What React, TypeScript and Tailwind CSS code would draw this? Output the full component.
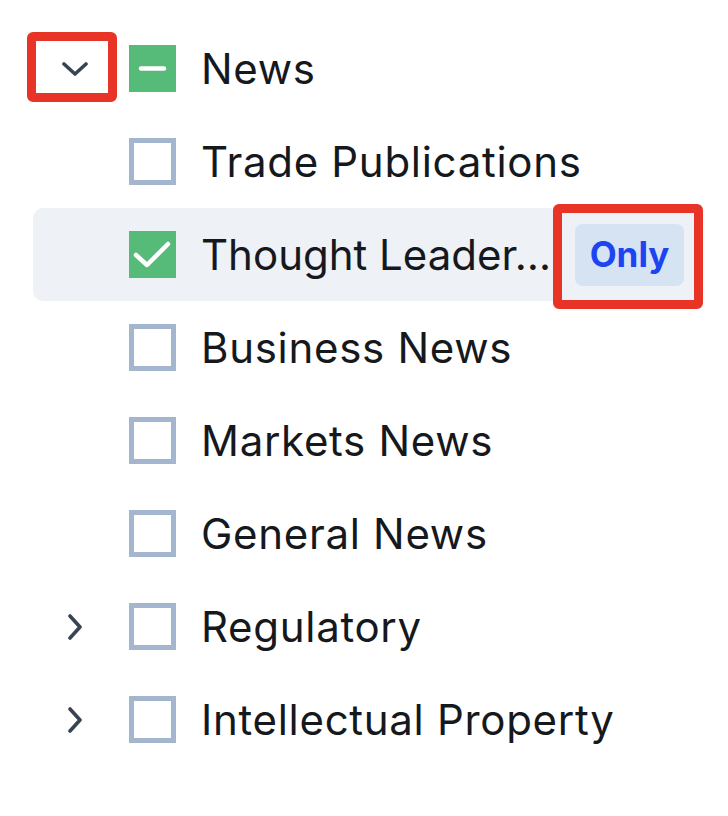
import React from 'react';

type Node = {
  label: string;
  level: 0 | 1;
  state: 'none' | 'checked' | 'partial';
  expander?: 'open' | 'closed';
  highlight?: boolean;
};

const nodes: Node[] = [
  { label: 'News', level: 0, state: 'partial', expander: 'open' },
  { label: 'Trade Publications', level: 1, state: 'none' },
  { label: 'Thought Leader…', level: 1, state: 'checked', highlight: true },
  { label: 'Business News', level: 1, state: 'none' },
  { label: 'Markets News', level: 1, state: 'none' },
  { label: 'General News', level: 1, state: 'none' },
  { label: 'Regulatory', level: 0, state: 'none', expander: 'closed' },
  { label: 'Intellectual Property', level: 0, state: 'none', expander: 'closed' },
];

const Chevron = ({ open }: { open: boolean }) => (
  <svg width="26" height="26" viewBox="0 0 26 26" fill="none" stroke="#384354" strokeWidth="3.6" strokeLinecap="round" strokeLinejoin="round">
    {open ? <path d="M2 8 L13 18 L24 8" /> : <path d="M8 2 L18 13 L8 24" />}
  </svg>
);

const Box = ({ state }: { state: Node['state'] }) => {
  if (state === 'none') {
    return <div className="w-[47px] h-[47px] shrink-0 border-[5px] border-[#a4b6cd] bg-white" />;
  }
  return (
    <div className="w-[47px] h-[47px] shrink-0 bg-[#56bb78] flex items-center justify-center">
      <svg width="47" height="47" viewBox="0 0 47 47" fill="none" stroke="#fff" strokeWidth="4.5" strokeLinecap="round" strokeLinejoin="round">
        {state === 'checked' ? <path d="M7 24 L18 34 L39 13" /> : <path d="M12 23.5 L35 23.5" />}
      </svg>
    </div>
  );
};

const Redbox = ({ className }: { className: string }) => (
  <div className={`absolute border-[9px] border-[#e83426] rounded-[6px] pointer-events-none ${className}`} />
);

export default function App() {
  return (
    <div className="w-[728px] h-[816px] bg-white pt-[22px]" style={{ fontFamily: 'Inter, "Noto Sans", sans-serif' }}>
      <div className="ml-[33px] w-[665px]">
        {nodes.map((n, i) => (
          <div key={i} className={`relative h-[93px] flex items-center rounded-[10px] pr-[14px] ${n.highlight ? 'bg-[#eef1f5]' : ''}`}>
            <div className="w-[84px] shrink-0 flex items-center justify-center">
              {n.expander && <Chevron open={n.expander === 'open'} />}
            </div>
            <div className="ml-[12px]">
              <Box state={n.state} />
            </div>
            <div className={`ml-[25px] flex-1 whitespace-nowrap text-[42px] text-[#15181c] leading-normal ${n.highlight ? 'tracking-[0px]' : 'tracking-[0.7px]'}`}>{n.label}</div>
            {n.highlight && (
              <div className="relative shrink-0">
                <div className="w-[109px] h-[62px] rounded-[8px] bg-[#d5e3f2] flex items-center justify-center text-[35px] font-bold text-[#1c44f0]">
                  Only
                </div>
                <Redbox className="-left-[22px] -top-[20px] w-[150px] h-[105px]" />
              </div>
            )}
            {n.expander === 'open' && <Redbox className="-left-[6px] top-[10px] w-[90px] h-[70px]" />}
          </div>
        ))}
      </div>
    </div>
  );
}
